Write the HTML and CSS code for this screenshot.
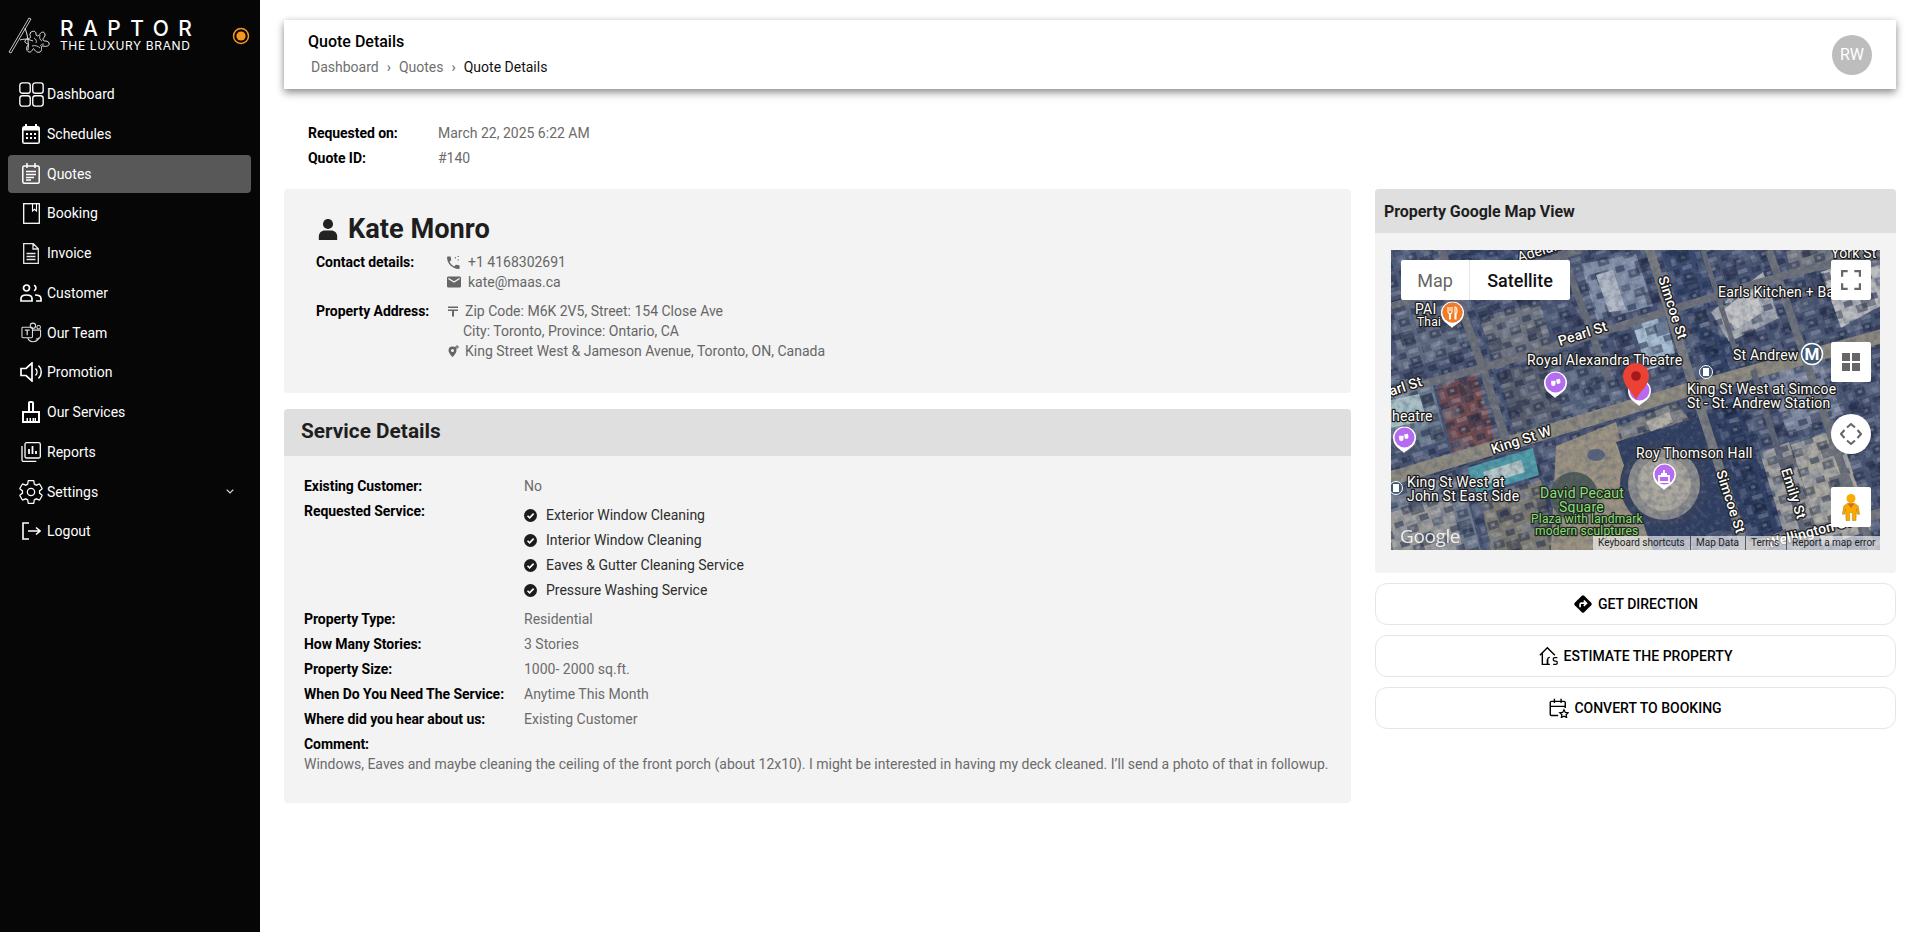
FILE: index.html
```html
<!DOCTYPE html>
<html lang="en">
<head>
<meta charset="utf-8">
<title>Quote Details</title>
<link rel="stylesheet" href="styles.css">
</head>
<body>
<div class="app">
<aside class="sidebar">
  <div class="brand">
    <svg class="brand-mark" viewBox="0 0 50 40" width="50" height="40">
      <path d="M1 36 L21 2 L23 3 L3 37 Z" fill="none" stroke="#ddd" stroke-width=".9"/>
      <path d="M17 12c3 8 4 16 3 22M12 24c6-2 10 0 13 1M22 17c3-3 6-2 6 1s3 2 4 0 4-3 5 0-3 4-2 6 5 0 6 3-3 4-6 3 0 5-3 6-5-1-6-3-2 4-5 3-3-5-1-7-4-1-3-4 3-2 5-3-2-4 1-5" fill="none" stroke="#e4e4e4" stroke-width="1"/>
      <path d="M26 22c2 1 3 3 2 5M32 19c-1 3 0 5 2 6M24 30c3-1 6 0 8 2M36 28c-2 0-3 1-4 2" fill="none" stroke="#ccc" stroke-width=".9"/>
    </svg>
    <div class="brand-text">
      <div class="brand-name">RAPTOR</div>
      <div class="brand-sub">THE LUXURY BRAND</div>
    </div>
    <svg class="brand-toggle" viewBox="0 0 18 18" width="18" height="18"><circle cx="9" cy="9" r="7.500" fill="none" stroke="#f7981d" stroke-width="1.500"/><circle cx="9" cy="9" r="4.600" fill="#f7981d"/></svg>
  </div>
  <nav class="nav">
    <a class="nav-item"><span class="nav-icon"><svg viewBox="0 0 24 24" width="25" height="25" fill="none" stroke="#fff" stroke-width="1.300"><rect x=".8" y=".8" width="10" height="10" rx="2.500"/><rect x="13.200" y=".8" width="10" height="10" rx="2.500"/><rect x=".8" y="13.200" width="10" height="10" rx="2.500"/><rect x="13.200" y="13.200" width="10" height="10" rx="2.500"/></svg></span>Dashboard</a>
    <a class="nav-item"><span class="nav-icon"><svg viewBox="0 0 18 20" width="18" height="20"><path fill="#fff" d="M15.500 2H15V0h-2v2H5V0H3v2h-.5A2.500 2.500 0 0 0 0 4.500v13A2.500 2.500 0 0 0 2.500 20h13a2.500 2.500 0 0 0 2.500-2.500v-13A2.500 2.500 0 0 0 15.500 2z"/><rect x="1.600" y="6.500" width="14.800" height="12" fill="#060606"/><g fill="#fff"><rect x="4" y="9" width="2" height="2"/><rect x="8" y="9" width="2" height="2"/><rect x="12" y="9" width="2" height="2"/><rect x="4" y="13" width="2" height="2"/><rect x="8" y="13" width="2" height="2"/><rect x="12" y="13" width="2" height="2"/></g></svg></span>Schedules</a>
    <a class="nav-item active"><span class="nav-icon"><svg viewBox="0 0 18 21" width="18" height="21" fill="none" stroke="#fff" stroke-width="1.500"><rect x=".8" y="3" width="16.400" height="17.200" rx="1.500"/><path d="M5 0v5M13 0v5M4 8.500h10M4 11.500h10M4 14.500h8M4 17h5"/></svg></span>Quotes</a>
    <a class="nav-item"><span class="nav-icon"><svg viewBox="0 0 17 21" width="17" height="21" fill="none" stroke="#fff" stroke-width="1.300"><rect x=".7" y=".7" width="15.600" height="19.600"/><path d="M9.500 1v7l2-1.700 2 1.700V1" stroke-width="1.100"/></svg></span>Booking</a>
    <a class="nav-item"><span class="nav-icon"><svg viewBox="0 0 16 21" width="16" height="21" fill="none" stroke="#e8e8e8" stroke-width="1.300"><path d="M.7.700h9.600l5 5v14.600H.7zM10 1v5h5"/><path d="M3.500 10.500h9M3.500 13.500h9M3.500 16.500h9" stroke-width="1.600"/></svg></span>Invoice</a>
    <a class="nav-item"><span class="nav-icon"><svg viewBox="0 0 22 18" width="22" height="18" fill="none" stroke="#fff" stroke-width="1.700"><circle cx="6.500" cy="4" r="3"/><path d="M14 1.200a3 3 0 0 1 0 5.600"/><path d="M1 17v-2.500C1 12 3 11 6.500 11s5.500 1 5.500 3.500V17z"/><path d="M15 11c3.500 0 6 1 6 3.500V17h-5"/></svg></span>Customer</a>
    <a class="nav-item"><span class="nav-icon"><svg viewBox="0 0 22 21" width="21" height="21" fill="none" stroke="#ddd" stroke-width="1.100"><rect x="1" y="5" width="11" height="11" rx="1"/><path d="M4 8h5M6.500 8v5.500" stroke-width="1.300"/><circle cx="12.500" cy="3.500" r="2.800"/><circle cx="18.500" cy="5" r="1.900"/><path d="M12 8h8.500v6a3.500 3.500 0 0 1-5 3"/><path d="M7 16c1 3 4 4.500 7 4s4-2 4.500-4"/></svg></span>Our Team</a>
    <a class="nav-item"><span class="nav-icon"><svg viewBox="0 0 23 20" width="23" height="20" fill="none" stroke="#fff" stroke-width="1.700"><path d="M1 6.500h5L12 1v18l-6-5.500H1z"/><path d="M15.500 6.500a5 5 0 0 1 0 7M18.500 3.500a9 9 0 0 1 0 13" stroke-width="1.500"/></svg></span>Promotion</a>
    <a class="nav-item"><span class="nav-icon"><svg viewBox="3 1 18 22" width="18" height="22"><path fill="#fff" d="M16 11h-1V3c0-1.100-.9-2-2-2h-2c-1.100 0-2 .9-2 2v8H3v12h18V11zm-5-8h2v8h-2zm8 18h-2v-3h-1.500v3H15v-3h-1.500v3H12v-3h-1.500v3H9v-3H7.500v3H5v-8h14z"/></svg></span>Our Services</a>
    <a class="nav-item"><span class="nav-icon"><svg viewBox="0 0 20 20" width="20" height="20" fill="none" stroke="#fff" stroke-width="1.300"><rect x="4" y=".7" width="15.300" height="15.300" rx="1.500"/><path d="M1 4v14a1.300 1.300 0 0 0 1.300 1.300h13"/><path d="M8 12V7M11.500 12V4M15 12V9" stroke-width="1.800"/></svg></span>Reports</a>
    <a class="nav-item has-chevron"><span class="nav-icon"><svg viewBox="1.500 1.500 21 21" width="24" height="24" fill="none" stroke="#fff" stroke-width="1.100"><path d="M19.430 12.980c.04-.32.07-.64.07-.98s-.03-.66-.07-.98l2.110-1.650c.19-.15.24-.42.12-.64l-2-3.460c-.12-.22-.39-.3-.61-.22l-2.490 1c-.52-.4-1.080-.73-1.690-.98l-.38-2.650C14.460 2.180 14.250 2 14 2h-4c-.25 0-.46.18-.49.42l-.38 2.650c-.61.25-1.170.59-1.690.98l-2.490-1c-.23-.09-.49 0-.61.22l-2 3.460c-.13.22-.07.49.12.64l2.110 1.650c-.04.32-.07.65-.07.98s.03.66.07.98l-2.110 1.650c-.19.15-.24.42-.12.64l2 3.460c.12.22.39.3.61.22l2.490-1c.52.4 1.080.73 1.690.98l.38 2.650c.03.24.24.42.49.42h4c.25 0 .46-.18.49-.42l.38-2.650c.61-.25 1.170-.59 1.690-.98l2.490 1c.23.09.49 0 .61-.22l2-3.460c.12-.22.07-.49-.12-.64l-2.110-1.650z"/><circle cx="12" cy="12" r="3.200"/></svg></span>Settings<svg class="chevron" viewBox="0 0 8 5" width="8" height="5" fill="none" stroke="#ddd" stroke-width="1.200"><path d="M.7.700 4 4 7.300.7"/></svg></a>
    <a class="nav-item"><span class="nav-icon"><svg viewBox="0 0 19 18" width="19" height="18" fill="none" stroke="#fff" stroke-width="1.600"><path d="M7 1H1v16h6"/><path d="M6 9h12M14 5.500 18 9l-4 3.500"/></svg></span>Logout</a>
  </nav>
</aside>
<main class="main">
  <header class="topbar">
    <div class="top-text">
      <h1 class="page-title">Quote Details</h1>
      <div class="crumbs"><span class="crumb">Dashboard</span><span class="sep">›</span><span class="crumb">Quotes</span><span class="sep">›</span><span class="crumb-now">Quote Details</span></div>
    </div>
    <div class="avatar">RW</div>
  </header>
  <section class="meta">
    <div class="meta-row"><b class="label">Requested on:</b><span class="value">March 22, 2025 6:22 AM</span></div>
    <div class="meta-row"><b class="label">Quote ID:</b><span class="value">#140</span></div>
  </section>
  <div class="columns">
    <div class="col-left">
      <section class="card person">
        <h2 class="person-name"><svg viewBox="0 0 24 24" width="22" height="22" fill="#222"><circle cx="12" cy="6.500" r="5.500"/><path d="M2 24v-4c0-4 3-6.500 6.500-6.500h7C19 13.500 22 16 22 20v4z"/></svg>Kate Monro</h2>
        <div class="contact-group">
          <b class="contact-label">Contact details:</b>
          <div class="contact-lines">
            <div class="line"><svg class="mini" viewBox="3 1 20 20" width="14" height="14" fill="#666"><path d="M6.620 10.790c1.440 2.830 3.760 5.140 6.590 6.590l2.200-2.200c.27-.27.67-.36 1.020-.24 1.120.37 2.330.57 3.570.57.55 0 1 .45 1 1V20c0 .55-.45 1-1 1-9.390 0-17-7.610-17-17 0-.55.45-1 1-1h3.500c.55 0 1 .45 1 1 0 1.250.2 2.450.57 3.570.11.35.03.74-.25 1.020l-2.200 2.200z"/><circle cx="15" cy="5" r="1"/><circle cx="19" cy="3" r="1"/><circle cx="19" cy="8" r="1"/></svg>+1 4168302691</div>
            <div class="line"><svg class="mini" viewBox="2 2 20 20" width="14" height="14" fill="#666"><path d="M20 4H4c-1.100 0-2 .9-2 2v12c0 1.100.9 2 2 2h16c1.100 0 2-.9 2-2V6c0-1.100-.9-2-2-2zm0 4-8 5-8-5V6l8 5 8-5v2z"/></svg>kate@maas.ca</div>
          </div>
        </div>
        <div class="contact-group address">
          <b class="contact-label">Property Address:</b>
          <div class="contact-lines">
            <div class="line tight"><svg class="mini" viewBox="0 0 12 12" width="12" height="12" fill="#666"><path d="M1 1.500h10v1.500H1zM1 4.500h10V6H7v5.500H5V6H1z"/></svg>Zip Code: M6K 2V5, Street: 154 Close Ave</div>
            <div class="line indent">City: Toronto, Province: Ontario, CA</div>
            <div class="line tight"><svg class="mini" viewBox="0 0 12 12" width="12" height="12" fill="#666"><path d="M5.500 1.500A4 4 0 0 0 1.500 5.500c0 2.800 4 6.500 4 6.500s4-3.700 4-6.500a4 4 0 0 0-4-4zm0 5.500a1.500 1.500 0 1 1 0-3 1.500 1.500 0 0 1 0 3zM9.500 0h1v1.500H12v1h-1.500V4h-1V2.500H8v-1h1.500z"/></svg>King Street West &amp; Jameson Avenue, Toronto, ON, Canada</div>
          </div>
        </div>
      </section>
      <section class="card service">
        <h2 class="service-head">Service Details</h2>
        <div class="service-body">
          <div class="row"><b class="label">Existing Customer:</b><span class="value">No</span></div>
          <div class="row"><b class="label">Requested Service:</b>
            <ul class="services">
              <li><svg viewBox="0 0 24 24" width="13" height="13"><circle cx="12" cy="12" r="12" fill="#1c1c1c"/><path d="m6.500 12.500 3.800 3.800 7.500-7.800" fill="none" stroke="#fff" stroke-width="3"/></svg>Exterior Window Cleaning</li>
              <li><svg viewBox="0 0 24 24" width="13" height="13"><circle cx="12" cy="12" r="12" fill="#1c1c1c"/><path d="m6.500 12.500 3.800 3.800 7.500-7.800" fill="none" stroke="#fff" stroke-width="3"/></svg>Interior Window Cleaning</li>
              <li><svg viewBox="0 0 24 24" width="13" height="13"><circle cx="12" cy="12" r="12" fill="#1c1c1c"/><path d="m6.500 12.500 3.800 3.800 7.500-7.800" fill="none" stroke="#fff" stroke-width="3"/></svg>Eaves &amp; Gutter Cleaning Service</li>
              <li><svg viewBox="0 0 24 24" width="13" height="13"><circle cx="12" cy="12" r="12" fill="#1c1c1c"/><path d="m6.500 12.500 3.800 3.800 7.500-7.800" fill="none" stroke="#fff" stroke-width="3"/></svg>Pressure Washing Service</li>
            </ul>
          </div>
          <div class="row"><b class="label">Property Type:</b><span class="value">Residential</span></div>
          <div class="row"><b class="label">How Many Stories:</b><span class="value">3 Stories</span></div>
          <div class="row"><b class="label">Property Size:</b><span class="value">1000- 2000 sq.ft.</span></div>
          <div class="row"><b class="label">When Do You Need The Service:</b><span class="value">Anytime This Month</span></div>
          <div class="row"><b class="label">Where did you hear about us:</b><span class="value">Existing Customer</span></div>
          <div class="stack"><b class="label">Comment:</b></div>
          <div class="stack comment value">Windows, Eaves and maybe cleaning the ceiling of the front porch (about 12x10). I might be interested in having my deck cleaned. I’ll send a photo of that in followup.</div>
        </div>
      </section>
    </div>
    <div class="col-right">
      <section class="card mapcard">
        <h2 class="map-head">Property Google Map View</h2>
        <div class="map-body">
          <div class="map">
            <svg class="map-art" viewBox="0 0 489 300" width="489" height="300">
              <defs>
                <filter id="grain" x="0" y="0" width="100%" height="100%"><feTurbulence type="fractalNoise" baseFrequency=".16" numOctaves="3" seed="7"/><feColorMatrix values="0 0 0 0 .06  0 0 0 0 .08  0 0 0 0 .16  2.400 0 0 0 -.95"/></filter>
                <filter id="glint" x="0" y="0" width="100%" height="100%"><feTurbulence type="fractalNoise" baseFrequency=".2" numOctaves="3" seed="21"/><feColorMatrix values="0 0 0 0 .85  0 0 0 0 .86  0 0 0 0 .88  2.600 0 0 0 -1.350"/></filter>
                <filter id="soft"><feGaussianBlur stdDeviation=".6"/></filter>
                <pattern id="roofs" width="26" height="20" patternUnits="userSpaceOnUse" patternTransform="rotate(-17)">
                  <rect x="1" y="2" width="9" height="6" fill="#1f2b48" opacity=".55"/>
                  <rect x="13" y="1" width="10" height="4" fill="#c3c8d0" opacity=".28"/>
                  <rect x="4" y="11" width="5" height="7" fill="#b9bcc2" opacity=".22"/>
                  <rect x="12" y="9" width="11" height="8" fill="#18233e" opacity=".45"/>
                  <rect x="15" y="11" width="4" height="3" fill="#d9d9d9" opacity=".3"/>
                </pattern>
                <pattern id="roofs2" width="41" height="33" patternUnits="userSpaceOnUse" patternTransform="rotate(-17)">
                  <rect x="2" y="3" width="16" height="12" fill="#8a93a6" opacity=".3"/>
                  <rect x="24" y="16" width="14" height="13" fill="#141e36" opacity=".4"/>
                </pattern>
                <symbol id="pin" viewBox="0 0 24 28" overflow="visible"><path d="M12 28c-2-3-11-6-11-15a11.500 11.500 0 0 1 23 0c0 9-10 12-12 15z" fill="#fff"/><circle cx="12.500" cy="12.500" r="10" fill="#b56cf0"/></symbol>
                <symbol id="masks" viewBox="0 0 24 24"><path d="M5 9h7v5a3.500 3.500 0 0 1-7 0z" fill="#fff"/><path d="M13 7l6-1 1 5a3.500 3.500 0 0 1-6 2z" fill="#fff"/></symbol>
              </defs>
              <rect width="489" height="300" fill="#46526f"/>
              <g filter="url(#soft)">
                <polygon points="0,0 60,0 50,30 0,45" fill="#4d5a77"/>
                <polygon points="0,55 55,42 75,100 8,122" fill="#5f6a80"/>
                <polygon points="88,68 148,52 162,96 104,114" fill="#70757f"/>
                <polygon points="62,0 165,0 150,25 72,45" fill="#3c4b6d"/>
                <polygon points="190,14 245,4 262,56 206,70" fill="#7f8ca5"/>
                <polygon points="240,70 274,63 286,112 256,120" fill="#a5bdd2"/>
                <polygon points="320,62 372,22 388,68 338,92" fill="#a5a8ae"/>
                <polygon points="430,22 489,0 489,56 450,78" fill="#b9babb"/>
                <polygon points="270,0 315,0 335,55 290,65" fill="#37476d"/>
                <polygon points="300,70 345,95 365,120 320,130" fill="#2f3f63"/>
                <polygon points="395,0 489,0 489,10 400,25" fill="#75797f"/>
                <polygon points="0,130 40,128 55,190 0,205" fill="#6b7c8e"/>
                <polygon points="45,136 85,124 106,190 62,202" fill="#70474b"/>
                <polygon points="108,122 160,110 178,165 124,180" fill="#565c6a"/>
                <polygon points="155,118 214,103 232,150 175,168" fill="#54617a"/>
                <polygon points="215,110 245,102 262,140 235,150" fill="#3c4663"/>
                <polygon points="0,240 70,225 90,300 0,300" fill="#6f7b8d"/>
                <polygon points="0,262 60,250 72,300 0,300" fill="#9b9a97"/>
                <polygon points="90,250 150,230 165,300 100,300" fill="#7e7a70"/>
                <polygon points="220,180 285,152 300,172 232,200" fill="#7d7e7d"/>
                <polygon points="352,210 398,192 428,282 375,300" fill="#9d9c99"/>
                <polygon points="400,195 448,178 480,280 432,296" fill="#a9a69c"/>
                <polygon points="372,125 428,108 452,165 398,184" fill="#7b879e"/>
                <polygon points="318,150 350,140 392,280 360,296" fill="#2d3c60"/>
                <rect width="489" height="300" fill="url(#roofs)"/>
                <rect width="489" height="300" fill="url(#roofs2)"/>
                <polygon points="205,25 222,20 235,60 218,62" fill="#b0b8c4"/>
                <polygon points="332,60 362,36 372,62 344,80" fill="#c2c3c4"/>
                <polygon points="0,150 28,144 36,170 0,178" fill="#a8c0c4"/>
                <polygon points="76,218 142,198 148,225 86,244" fill="#4d9aa7"/>
                <polygon points="92,222 130,210 134,222 96,234" fill="#b4c7c6"/>
                <polygon points="165,196 225,172 240,242 262,300 160,300" fill="#9a917f"/>
                <ellipse cx="183" cy="246" rx="24" ry="24" fill="#4f5a56"/>
                <ellipse cx="205" cy="205" rx="9" ry="6" fill="#56627a"/>
                <polygon points="255,172 278,162 282,172 260,182" fill="#b3afa6"/>
                <polygon points="225,192 322,163 358,272 262,300" fill="#2f3d5e"/>
              </g>
              <circle cx="273" cy="234" r="44" fill="#343f5b"/>
              <circle cx="273" cy="234" r="36" fill="#8b8b8a"/>
              <circle cx="273" cy="234" r="27" fill="#aaa69c"/>
              <g fill="none" stroke-linecap="butt" filter="url(#soft)">
                <path d="M-5 230 300 139 495 85" stroke="#8d897d" stroke-width="14"/>
                <path d="M-5 145 90 118 170 95 280 60 370 32 495 -2" stroke="#6d7079" stroke-width="8"/>
                <path d="M0 56 190 0" stroke="#6b6e76" stroke-width="7"/>
                <path d="M298 312 495 262" stroke="#74757a" stroke-width="10"/>
                <path d="M50 0 94 125 118 200" stroke="#6a6d75" stroke-width="8"/>
                <path d="M170 0 218 130" stroke="#666a74" stroke-width="7"/>
                <path d="M258 -2 355 300" stroke="#787a7d" stroke-width="9"/>
                <path d="M312 0 348 112" stroke="#666a74" stroke-width="5"/>
                <path d="M378 0 445 200 489 320" stroke="#6c6f78" stroke-width="8"/>
                <path d="M362 120 418 300" stroke="#5d6373" stroke-width="6"/>
              </g>
              <rect width="489" height="300" filter="url(#grain)" opacity=".38"/>
              <rect width="489" height="300" filter="url(#glint)" opacity=".16"/>
              <text class="ml" transform="translate(128 12) rotate(-17)">Adelaide St</text>
              <text class="ml bold" transform="translate(267 28) rotate(72)">Simcoe St</text>
              <text class="ml bold" transform="translate(169 96) rotate(-18)">Pearl St</text>
              <text class="ml" x="327" y="47">Earls Kitchen + Bar</text>
              <text class="ml" x="24" y="64">PAI</text>
              <text class="ml small" x="26" y="76">Thai</text>
              <text class="ml" x="136" y="115">Royal Alexandra Theatre</text>
              <text class="ml" x="342" y="110">St Andrew</text>
              <text class="ml" x="296" y="144">King St West at Simcoe</text>
              <text class="ml" x="296" y="158">St - St. Andrew Station</text>
              <text class="ml bold" transform="translate(0 146) rotate(-18)">arl St</text>
              <text class="ml" x="1" y="171">heatre</text>
              <text class="ml bold" transform="translate(102 204) rotate(-18)">King St W</text>
              <text class="ml" x="245" y="208">Roy Thomson Hall</text>
              <text class="ml" x="16" y="237">King St West at</text>
              <text class="ml" x="16" y="251">John St East Side</text>
              <text class="ml green" x="149" y="248">David Pecaut</text>
              <text class="ml green" x="168" y="262">Square</text>
              <text class="ml green small" x="140" y="273">Plaza with landmark</text>
              <text class="ml green small" x="144" y="285">modern sculptures</text>
              <text class="ml bold" transform="translate(325 222) rotate(72)">Simcoe St</text>
              <text class="ml bold" transform="translate(390 220) rotate(72)">Emily St</text>
              <text class="ml bold" transform="translate(378 298) rotate(-15)">Wellington St W</text>
              <text class="ml" x="440" y="8">York St</text>
              <text class="google" x="9" y="293">Google</text>
              <use href="#pin" x="49" y="50" width="24" height="28"/>
              <circle cx="61.500" cy="62.500" r="10" fill="#f47b20"/>
              <path d="M57 57v5c0 1 1 1.500 1.500 1.500V69h1v-5.500c.5 0 1.500-.5 1.500-1.500v-5M59 57v4M64 57c1.500 0 2 2 2 4s-.5 2.500-1 2.500V69h-1z" fill="none" stroke="#fff" stroke-width="1.100"/>
              <use href="#pin" x="152" y="120" width="24" height="28"/>
              <use href="#masks" x="157" y="125" width="15" height="15"/>
              <use href="#pin" x="236" y="128" width="24" height="28"/>
              <use href="#pin" x="1" y="175" width="24" height="28"/>
              <use href="#masks" x="5" y="180" width="15" height="15"/>
              <use href="#pin" x="261" y="212" width="24" height="28"/>
              <path d="M268 232v-6h10v6zM273 220v5M270 224h6" fill="none" stroke="#fff" stroke-width="1.800"/>
              <circle cx="421" cy="104" r="10.500" fill="#3f5874" stroke="#fff" stroke-width="1.500"/>
              <text class="mbadge" x="421" y="110">M</text>
              <circle cx="315" cy="122" r="6.500" fill="#3f5874" stroke="#fff"/>
              <rect x="312" y="118" width="6" height="8" fill="#fff"/>
              <circle cx="5" cy="238" r="6.500" fill="#3f5874" stroke="#fff"/>
              <rect x="2" y="234" width="6" height="8" fill="#fff"/>
              <path d="M245 150c-3-8-13-14-13-24a13 13 0 0 1 26 0c0 10-10 16-13 24z" fill="#ea4335"/>
              <circle cx="245" cy="126" r="4.800" fill="#a6191a"/>
            </svg>
            <div class="map-type"><span class="mt-map">Map</span><span class="mt-sat">Satellite</span></div>
            <button class="map-btn fullscreen" aria-label="Fullscreen"><svg viewBox="0 0 18 18" width="20" height="20" fill="none" stroke="#666" stroke-width="2"><path d="M1 6V1h5M12 1h5v5M17 12v5h-5M6 17H1v-5"/></svg></button>
            <button class="map-btn layers" aria-label="Layers"><svg viewBox="0 0 18 18" width="18" height="18" fill="#666"><rect width="8" height="8"/><rect x="10" width="8" height="8"/><rect y="10" width="8" height="8"/><rect x="10" y="10" width="8" height="8"/></svg></button>
            <button class="map-btn move" aria-label="Move"><svg viewBox="0 0 22 22" width="22" height="22" fill="none" stroke="#666" stroke-width="2"><path d="M7 4.500 11 1l4 3.500M7 17.500l4 3.500 4-3.500M4.500 7 1 11l3.500 4M17.500 7 21 11l-3.500 4"/></svg></button>
            <button class="map-btn peg" aria-label="Street View"><svg viewBox="0 0 20 30" width="18" height="30"><circle cx="10" cy="5.500" r="5" fill="#f9ab00"/><path d="M6 11h8l4 3 1.500 9H17l-1-6-.5 13h-4V21h-3v9h-4L4 17l-1 6H.5L2 14z" fill="#f9ab00" stroke="#a36d00" stroke-width=".5"/><path d="M6 11h8l-4 5z" fill="#d9662a"/></svg></button>
            <div class="attribution"><span class="at-a">Keyboard shortcuts</span><span class="at-b">Map Data</span><span class="at-c">Terms</span><span class="at-d">Report a map error</span></div>
          </div>
        </div>
      </section>
      <a class="action"><svg viewBox="0 0 24 24" width="20" height="20"><rect x="4" y="4" width="16" height="16" rx="2" transform="rotate(45 12 12)" fill="#000"/><path d="M8.500 16v-3.500a1.500 1.500 0 0 1 1.500-1.500h6M13 7.800 16.200 11 13 14.200" fill="none" stroke="#fff" stroke-width="2"/></svg><span>GET DIRECTION</span></a>
      <a class="action"><svg viewBox="0 0 24 24" width="20" height="20" fill="none" stroke="#000" stroke-width="1.700"><path d="M1 11 10 2l9 9M4 9v13h6v-6"/><path d="M13 13.500a2.500 2.500 0 0 0-2.500 2.500v6H13M22 14h-3a1.500 1.500 0 0 0 0 4h1a1.500 1.500 0 0 1 0 4h-3" stroke-width="1.500"/></svg><span>ESTIMATE THE PROPERTY</span></a>
      <a class="action"><svg viewBox="0 0 24 24" width="20" height="20" fill="none" stroke="#000" stroke-width="1.700"><path d="M11 21H3a1.500 1.500 0 0 1-1.500-1.500v-14A1.500 1.500 0 0 1 3 4h15a1.500 1.500 0 0 1 1.500 1.500V12M2 10h17M6.500 1v5M14.500 1v5"/><path d="m18 14 1.600 3.300 3.400.4-2.500 2.300.7 3.400-3.200-1.700-3.200 1.700.7-3.400-2.500-2.300 3.400-.4z" stroke-width="1.500"/></svg><span>CONVERT TO BOOKING</span></a>
    </div>
  </div>
</main>
</div>
</body>
</html>
```

FILE: styles.css
```css
* { box-sizing: border-box; }
html, body { margin: 0; padding: 0; height: 100%; overflow: hidden; }
body { font-family: Roboto, "Liberation Sans", sans-serif; font-size: 14px; color: #000; background: #fff; }
.app { display: flex; height: 932px; }

.sidebar { width: 260px; flex: none; background: #060606; color: #fff; }
.brand { height: 75px; display: flex; align-items: flex-start; padding: 10px 0 0 8px; }
.brand-mark { margin-top: 6px; flex: none; }
.brand-text { margin: 9px 0 0 2px; width: 132px; }
.brand-name { font-size: 21px; line-height: 20px; font-weight: 500; letter-spacing: 9.4px; white-space: nowrap; font-family: Inter, Roboto, sans-serif; }
.brand-sub { font-size: 12px; line-height: 11px; font-weight: 400; letter-spacing: .62px; white-space: nowrap; margin-top: 1px; font-family: Inter, Roboto, sans-serif; }
.brand-toggle { margin: 17px 0 0 40px; }

.nav { display: flex; flex-direction: column; gap: 1.75px; }
.nav-item { display: flex; align-items: center; height: 38px; margin: 0 9px 0 8px; padding-left: 8px; border-radius: 4px; color: #fff; font-size: 14px; }
.nav-item.active { background: #585858; }
.nav-icon { width: 30px; margin-right: 1px; display: flex; align-items: center; justify-content: center; flex: none; }
.chevron { margin-left: auto; margin-right: 17px; }

.main { flex: 1; min-width: 0; padding: 20px 24px 0; }
.topbar { height: 69px; display: flex; align-items: center; justify-content: space-between; padding: 0 24px; background: #fff; box-shadow: 0 4px 8px rgba(0,0,0,.4), 0 0 6px rgba(0,0,0,.1); }
.top-text { padding-bottom: 2px; }
.page-title { margin: 0 0 6px; font-size: 16px; line-height: 20px; font-weight: 500; }
.crumbs { display: flex; align-items: center; font-size: 14px; line-height: 18px; padding-left: 3px; }
.crumb { color: #6f6f6f; }
.sep { color: #666; margin: 0 8px; font-size: 14px; }
.crumb-now { color: #111; }
.avatar { width: 40px; height: 40px; border-radius: 50%; background: #bdbdbd; color: #fff; font-size: 16px; display: flex; align-items: center; justify-content: center; }

.meta { margin: 32px 0 18px; padding-left: 24px; }
.meta-row { display: grid; grid-template-columns: 130px 1fr; height: 25px; line-height: 25px; }
.label { font-weight: 700; color: #000; font-size: 14px; letter-spacing: -.05px; }
.value { color: #6b6b6b; }

.columns { display: grid; grid-template-columns: 1067px 521px; gap: 24px; }
.card { background: #f3f3f3; border-radius: 4px; overflow: hidden; }

.person { height: 204px; padding: 22px 0 0 32px; margin-bottom: 16px; }
.person-name { margin: 0; display: flex; align-items: center; gap: 9px; font-size: 27.2px; line-height: 36px; font-weight: 700; color: #1e1e1e; }
.person-name svg { margin-left: 1px; }
.contact-group { display: grid; grid-template-columns: 131px 1fr; margin-top: 5px; }
.contact-group.address { margin-top: 9px; }
.contact-label { line-height: 20px; letter-spacing: -.05px; }
.line { display: flex; align-items: center; height: 20px; color: #666; white-space: nowrap; }
.line .mini { margin-right: 7px; flex: none; }
.line.tight .mini { margin-right: 6px; }
.line.indent { padding-left: 16px; }

.service-head { margin: 0; height: 47px; line-height: 45px; padding-left: 17px; background: #dfdfdf; font-size: 20.8px; font-weight: 700; color: #1e1e1e; }
.service-body { padding: 18px 20px 21px; height: 347px; }
.row { display: grid; grid-template-columns: 220px 1fr; line-height: 25px; }
.services { list-style: none; margin: 4px 0; padding: 0; }
.services li { display: flex; align-items: center; gap: 9px; height: 25px; color: #2d2d2d; }
.services svg { flex: none; }
.stack { line-height: 25px; white-space: nowrap; }
.comment { margin-top: -5px; }

.map-head { margin: 0; height: 44px; line-height: 46px; padding-left: 9px; background: #dfdfdf; font-size: 16px; font-weight: 700; color: #1e1e1e; letter-spacing: -.05px; }
.map-body { padding: 17px 16px 23px; }
.map { position: relative; width: 489px; height: 300px; overflow: hidden; }
.map-art { display: block; }
.ml { font: 400 14px Roboto, sans-serif; fill: #fff; stroke: #1c1c1c; stroke-width: 2.6px; paint-order: stroke; stroke-linejoin: round; letter-spacing: .2px; }
.ml.bold { font-weight: 500; }
.ml.small { font-size: 12px; }
.ml.green { fill: #8fdc7c; stroke: #1d2a1d; }
.google { font: 500 19px "Open Sans", Roboto, sans-serif; fill: #fff; opacity: .85; letter-spacing: -.4px; }
.mbadge { font: 700 17px Roboto, sans-serif; fill: #fff; text-anchor: middle; }

.map-type { position: absolute; left: 10px; top: 10px; height: 40px; width: 169px; display: flex; background: #fff; border-radius: 2px; font-size: 18px; }
.mt-map { width: 69px; display: flex; align-items: center; justify-content: center; color: #666; border-right: 1px solid #e6e6e6; }
.mt-sat { flex: 1; display: flex; align-items: center; justify-content: center; font-weight: 500; color: #111; }
.map-btn { position: absolute; left: 440px; width: 40px; height: 40px; padding: 0; border: 0; background: #fff; border-radius: 2px; display: flex; align-items: center; justify-content: center; }
.fullscreen { top: 10px; }
.layers { top: 92px; }
.move { top: 164px; border-radius: 50%; }
.peg { top: 237px; }
.attribution { position: absolute; right: 0; bottom: 0; height: 14px; width: 287px; display: flex; background: rgba(255,255,255,.62); font-size: 10px; line-height: 14px; color: #222; white-space: nowrap; overflow: hidden; }
.attribution span { padding-left: 5px; border-right: 1px solid #555; }
.at-a { width: 98px; }
.at-b { width: 55px; }
.at-c { width: 41px; }
.at-d { border-right: 0 !important; flex: 1; }

.action { display: flex; align-items: center; justify-content: center; gap: 5px; height: 42px; margin-top: 10px; background: #fff; border: 1px solid #e6e6e6; border-radius: 12px; font-size: 14px; font-weight: 500; color: #000; }
```
